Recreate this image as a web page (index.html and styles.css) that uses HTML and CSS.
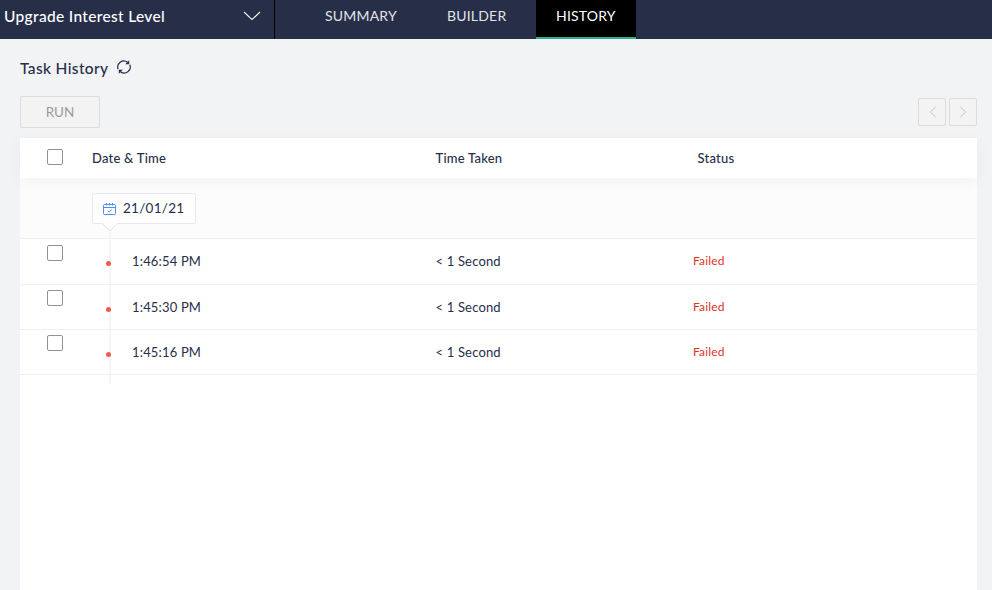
FILE: index.html
```html
<!DOCTYPE html>
<html lang="en">
<head>
<meta charset="utf-8">
<title>Task History</title>
<link rel="stylesheet" href="styles.css">
</head>
<body>
<header class="topbar">
  <div class="picker">
    <span class="picker-name">Upgrade Interest Level</span>
    <svg class="picker-arrow" width="18" height="10" viewBox="0 0 18 10"><path d="M1 1l8 7.6L17 1"/></svg>
  </div>
  <nav class="tabs">
    <a class="tab tab-summary">SUMMARY</a>
    <a class="tab tab-builder">BUILDER</a>
    <a class="tab active">HISTORY</a>
  </nav>
</header>
<main class="page">
  <div class="title-row">
    <h1 class="title">Task History</h1>
    <svg class="refresh" width="14" height="14" viewBox="0 0 14 14"><path d="M1.1 9.2A6.1 6.1 0 0 1 10.5 2.2M12.9 4.8A6.1 6.1 0 0 1 3.5 11.8"/><path class="tips" d="M12.2.2v4H8.2zM1.8 13.8v-4h4z"/></svg>
  </div>
  <div class="toolbar">
    <button class="run" disabled>RUN</button>
    <div class="pager">
      <button class="page-btn" disabled><svg width="8" height="12" viewBox="0 0 8 12"><path d="M6.8.8L1.4 6l5.4 5.2"/></svg></button>
      <button class="page-btn" disabled><svg width="8" height="12" viewBox="0 0 8 12"><path d="M1.2.8L6.6 6l-5.4 5.2"/></svg></button>
    </div>
  </div>
  <section class="table">
    <div class="row head">
      <span class="check"></span>
      <span>Date &amp; Time</span>
      <span>Time Taken</span>
      <span class="status-head">Status</span>
    </div>
    <div class="group">
      <div class="date">
        <svg class="cal" width="13" height="12" viewBox="0 0 13 12"><path d="M1.5 1.5h10a1 1 0 0 1 1 1v8a1 1 0 0 1-1 1h-10a1 1 0 0 1-1-1v-8a1 1 0 0 1 1-1zM.5 4.5h12M3.5 0v2.5M6.5 0v2.5M9.5 0v2.5M4.7 7.8l1.4 1.3 2.7-2.5"/></svg>
        <span class="date-text">21/01/21</span>
        <svg class="notch" width="16" height="9" viewBox="0 0 16 9"><path class="notch-fill" d="M.5 0L8 7.5 15.5 0z"/><path class="notch-line" d="M.5.5L8 8 15.5.5"/></svg>
      </div>
    </div>
    <div class="entries">
      <div class="row entry first">
        <span class="check"></span>
        <span class="time">1:46:54 PM</span>
        <span>&lt; 1 Second</span>
        <span class="failed">Failed</span>
      </div>
      <div class="row entry">
        <span class="check"></span>
        <span class="time">1:45:30 PM</span>
        <span>&lt; 1 Second</span>
        <span class="failed">Failed</span>
      </div>
      <div class="row entry">
        <span class="check"></span>
        <span class="time">1:45:16 PM</span>
        <span>&lt; 1 Second</span>
        <span class="failed">Failed</span>
      </div>
    </div>
  </section>
</main>
</body>
</html>
```
FILE: styles.css
```css
* { box-sizing: border-box; }
body {
  margin: 0;
  height: 590px;
  overflow: hidden;
  display: flex;
  flex-direction: column;
  background: #f1f3f5;
  color: #272e48;
  font-family: Lato, "Liberation Sans", sans-serif;
  font-size: 13px;
}
svg { display: block; fill: none; flex: none; }
.topbar {
  display: flex;
  height: 39px;
  flex: none;
  background: #272e48;
}
.picker {
  display: flex;
  justify-content: space-between;
  width: 275px;
  padding: 0 13px 0 4px;
  border-right: 1px solid #000;
  color: #fff;
}
.picker-name {
  font-size: 15.5px;
  font-weight: 500;
  letter-spacing: .33px;
  line-height: 33px;
}
.picker-arrow { margin-top: 11px; stroke: #fff; stroke-width: 1.1; }
.tabs { display: flex; padding-left: 30px; }
.tab {
  padding: 0 20px;
  font-size: 14px;
  letter-spacing: .2px;
  line-height: 32px;
  color: #e2e4e9;
}
.tab-summary { width: 122px; }
.tab-builder { width: 109px; }
.tab.active {
  width: 100px;
  background: #000;
  border-bottom: 2px solid #26b196;
  color: #fff;
}
.page {
  display: flex;
  flex-direction: column;
  flex: 1;
  padding: 18px 15px 0 20px;
}
.title-row { display: flex; height: 39px; }
.title {
  width: 88px;
  margin: 0;
  font-size: 15.5px;
  font-weight: 500;
  letter-spacing: .36px;
  line-height: 23px;
  white-space: nowrap;
}
.refresh { margin: 3px 0 0 9px; stroke: #272e48; stroke-width: 1.2; }
.tips { fill: #272e48; stroke: none; }
.toolbar {
  display: flex;
  justify-content: space-between;
  align-items: center;
  height: 32px;
  margin-bottom: 10px;
}
.run, .page-btn {
  padding: 0;
  border: 1px solid #dcdcdc;
  border-radius: 2px;
  background: #f3f3f3;
  color: #9b9b9b;
}
.run {
  width: 80px;
  height: 32px;
  padding-bottom: 1px;
  font: 13.5px Lato, sans-serif;
}
.pager { display: flex; gap: 3px; }
.page-btn {
  display: grid;
  place-items: center;
  width: 28px;
  height: 28px;
  stroke: #c4c4c4;
}
.page-btn:first-child svg { margin-left: 2px; }
.table {
  flex: 1;
  background: #fff;
}
.row {
  display: grid;
  grid-template-columns: 72px 343.5px 257.5px 1fr;
}
.head {
  position: relative;
  height: 40px;
  background: #fff;
  box-shadow: 0 4px 16px rgba(0, 0, 0, .045);
  font-weight: 500;
  letter-spacing: .23px;
  line-height: 40px;
}
.status-head { padding-left: 4.5px; }
.check {
  width: 16px;
  height: 16px;
  margin-left: 27px;
  border: 1px solid #929292;
  border-radius: 2px;
  background: #fff;
}
.head .check { margin-top: 11px; }
.group {
  height: 61px;
  padding: 15px 0 0 72px;
  background: #fcfcfc;
  border-bottom: 1px solid #efefef;
}
.date {
  position: relative;
  display: flex;
  width: 104px;
  height: 31px;
  padding-left: 10px;
  background: #fff;
  border: 1px solid #e6e8f4;
  border-radius: 2px;
}
.cal { margin-top: 9px; stroke: #4c8df0; }
.date-text {
  margin-left: 7px;
  font-size: 13.5px;
  letter-spacing: .27px;
  line-height: 29px;
}
.notch { position: absolute; left: 9px; top: 29px; }
.notch-fill { fill: #fff; }
.notch-line { stroke: #e3e5ec; }
.entries { position: relative; }
.entries::before {
  content: "";
  position: absolute;
  left: 89px;
  top: -8px;
  width: 2px;
  height: 153px;
  background: #f5f5f5;
}
.entry {
  height: 45px;
  border-bottom: 1px solid #efefef;
  letter-spacing: .17px;
  line-height: 44px;
}
.entry.first { height: 46px; line-height: 45px; }
.entry .check { margin-top: 5px; }
.entry.first .check { margin-top: 6px; }
.time { position: relative; padding-left: 40px; }
.time::before {
  content: "";
  position: absolute;
  left: 14px;
  top: 21.6px;
  width: 5.4px;
  height: 5.4px;
  border-radius: 50%;
  background: #ef5c4b;
}
.failed { font-size: 12px; line-height: 44px; color: #dc3526; }
```
